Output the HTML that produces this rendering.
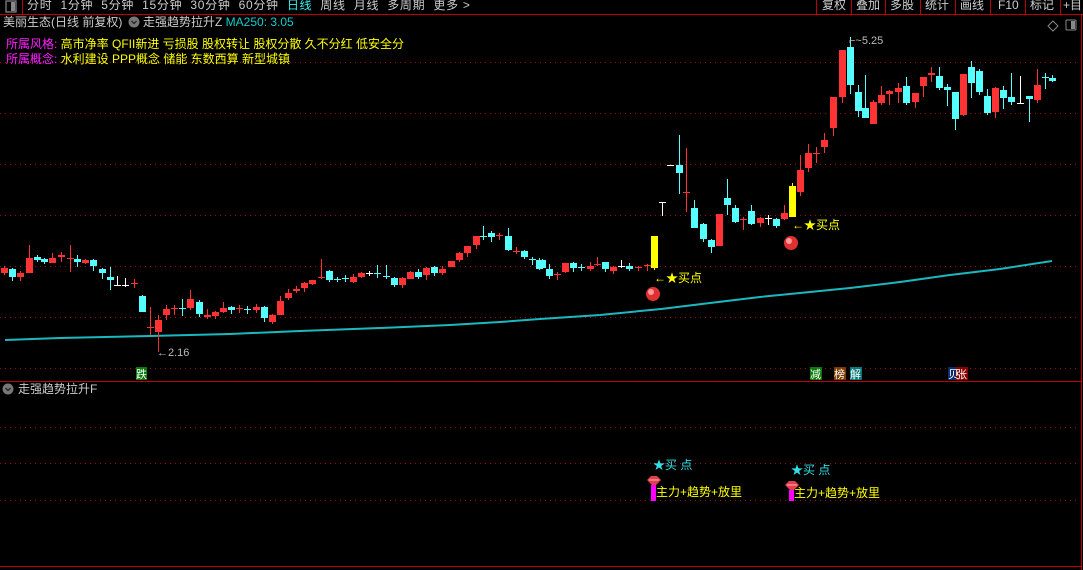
<!DOCTYPE html>
<html><head><meta charset="utf-8">
<style>
html,body{margin:0;padding:0;background:#000;width:1083px;height:570px;overflow:hidden;font-family:"Liberation Sans","Noto Sans CJK SC",sans-serif;}
#c{position:absolute;left:0;top:0}
.t{position:absolute;white-space:nowrap;font-size:12px;line-height:14px}
</style></head><body>
<svg id="c" width="1083" height="570" xmlns="http://www.w3.org/2000/svg" font-family="Liberation Sans, Noto Sans CJK SC, sans-serif">
<g id="grid" stroke="#a01010" stroke-width="1" stroke-dasharray="1,4">
<line x1="0" y1="62.5" x2="1080" y2="62.5"/>
<line x1="0" y1="113.5" x2="1080" y2="113.5"/>
<line x1="0" y1="164.5" x2="1080" y2="164.5"/>
<line x1="0" y1="215.5" x2="1080" y2="215.5"/>
<line x1="0" y1="266.5" x2="1080" y2="266.5"/>
<line x1="0" y1="317.5" x2="1080" y2="317.5"/>
<line x1="0" y1="368.5" x2="1080" y2="368.5"/>
<line x1="0" y1="427.5" x2="1080" y2="427.5"/>
<line x1="0" y1="463.5" x2="1080" y2="463.5"/>
<line x1="0" y1="500.5" x2="1080" y2="500.5"/>
</g>
<line x1="0" y1="14.5" x2="1083" y2="14.5" stroke="#c00000"/>
<line x1="22.5" y1="0" x2="22.5" y2="14" stroke="#c00000"/>
<rect x="6" y="1" width="10" height="11" fill="none" stroke="#888" stroke-width="1.2"/>
<rect x="11" y="2" width="4" height="9" fill="#888"/>
<g stroke="#c00000">
<line x1="816.5" y1="0" x2="816.5" y2="14"/><line x1="851.5" y1="0" x2="851.5" y2="14"/>
<line x1="885.5" y1="0" x2="885.5" y2="14"/><line x1="920.5" y1="0" x2="920.5" y2="14"/>
<line x1="955.5" y1="0" x2="955.5" y2="14"/><line x1="990.5" y1="0" x2="990.5" y2="14"/>
<line x1="1025.5" y1="0" x2="1025.5" y2="14"/><line x1="1060.5" y1="0" x2="1060.5" y2="14"/>
<line x1="1081.5" y1="14" x2="1081.5" y2="570"/>
</g>
<path d="M1053 21 l5 5 -5 5 -5 -5z" fill="none" stroke="#888"/>
<rect x="1066" y="20" width="10" height="10" rx="1" fill="none" stroke="#888"/>
<rect x="1071" y="21" width="4" height="8" fill="#888"/>
<line x1="0" y1="381.5" x2="1081" y2="381.5" stroke="#c00000"/>
<line x1="0" y1="566.5" x2="1081" y2="566.5" stroke="#c00000"/>
<circle cx="134" cy="22" r="5.5" fill="#777"/><path d="M131.5 21 l2.5 2.5 2.5-2.5" stroke="#222" fill="none" stroke-width="1.3"/>
<circle cx="8" cy="389" r="5.5" fill="#777"/><path d="M5.5 388 l2.5 2.5 2.5-2.5" stroke="#222" fill="none" stroke-width="1.3"/>
<polyline points="5,340 60,338 150,336 230,334 300,331 380,328 450,325 500,322 540,319 600,315 661,309 710,303 760,297 810,292 850,288 900,282 950,275 1000,269 1052,261" fill="none" stroke="#1cb8c0" stroke-width="2"/>
<g id="candles"></g>
<line x1="158.5" y1="340" x2="158.5" y2="352" stroke="#d33"/>
<text x="157" y="356" fill="#bbb" font-size="11">←2.16</text>
<text x="849" y="44" fill="#bbb" font-size="11">⌐~5.25</text>
<circle cx="653" cy="294" r="7" fill="#e03030"/><circle cx="651" cy="292" r="3" fill="#ff9a9a"/>
<circle cx="791" cy="243" r="7" fill="#e03030"/><circle cx="789" cy="241" r="3" fill="#ff9a9a"/>
<text x="654" y="282" fill="#ffff00" font-size="12">←★买点</text>
<text x="792" y="229" fill="#ffff00" font-size="12">←★买点</text>
<rect x="136" y="367" width="11" height="13" fill="#0a7a0a"/><text x="136" y="378" fill="#fff" font-size="11">跌</text>
<rect x="810" y="367" width="12" height="13" fill="#0a7a0a"/><text x="810" y="378" fill="#fff" font-size="11">减</text>
<rect x="834" y="367" width="12" height="13" fill="#7a3a00"/><text x="834" y="378" fill="#fff" font-size="11">榜</text>
<rect x="850" y="367" width="12" height="13" fill="#087878"/><text x="850" y="378" fill="#fff" font-size="11">解</text>
<rect x="948" y="367" width="8" height="13" fill="#0a2a6a"/><rect x="956" y="367" width="12" height="13" fill="#880000"/>
<text x="948" y="378" fill="#fff" font-size="11">贝</text><text x="956" y="378" fill="#fff" font-size="11">张</text>
<g>
<text x="653" y="469" fill="#30e0e8" font-size="12">★买 点</text>
<path d="M647 480 l4-4 h6 l4 4 -7 7z" fill="#e04050"/><path d="M649 480 h10" stroke="#ffb0b0"/>
<rect x="651" y="485" width="5" height="16" fill="#ff00ff"/>
<text x="656" y="496" fill="#ffff00" font-size="12">主力+趋势+放里</text>
<text x="791" y="474" fill="#30e0e8" font-size="12">★买 点</text>
<path d="M785 485 l4-4 h6 l4 4 -7 7z" fill="#e04050"/><path d="M787 485 h10" stroke="#ffb0b0"/>
<rect x="789" y="490" width="5" height="11" fill="#ff00ff"/>
<text x="794" y="497" fill="#ffff00" font-size="12">主力+趋势+放里</text>
</g>
</svg>
<div class="t" style="left:27px;top:-2px;color:#ccc;letter-spacing:0.7px">分时&nbsp; 1分钟&nbsp; 5分钟&nbsp; 15分钟&nbsp; 30分钟&nbsp; 60分钟&nbsp; <span style="color:#3ee">日线</span>&nbsp; 周线&nbsp; 月线&nbsp; 多周期&nbsp; 更多 &gt;</div>
<div class="t" style="left:822px;top:-2px;color:#ccc">复权</div>
<div class="t" style="left:856px;top:-2px;color:#ccc">叠加</div>
<div class="t" style="left:890px;top:-2px;color:#ccc">多股</div>
<div class="t" style="left:925px;top:-2px;color:#ccc">统计</div>
<div class="t" style="left:960px;top:-2px;color:#ccc">画线</div>
<div class="t" style="left:998px;top:-2px;color:#ccc">F10</div>
<div class="t" style="left:1030px;top:-2px;color:#ccc">标记</div>
<div class="t" style="left:1063px;top:-2px;color:#ccc">+目</div>
<div class="t" style="left:3px;top:15px;color:#ccc">美丽生态(日线 前复权)</div>
<div class="t" style="left:143px;top:15px;color:#ccc">走强趋势拉升Z <span style="color:#1cc">MA250: 3.05</span></div>
<div class="t" style="left:6px;top:37px;color:#ff20ff">所属风格: <span style="color:#ff0">高市净率 QFII新进 亏损股 股权转让 股权分散 久不分红 低安全分</span></div>
<div class="t" style="left:6px;top:52px;color:#ff20ff">所属概念: <span style="color:#ff0">水利建设 PPP概念 储能 东数西算 新型城镇</span></div>
<div class="t" style="left:18px;top:382px;color:#ccc">走强趋势拉升F</div>
<script>
var R='#ff3333',C='#55ffff',W='#ffffff',Y='#ffff00';
var a=[
[13,268,273,266,275,R],[36,269,277,268,281,C],[59,273,277,271,281,R],[83,258,273,245,273,R],[106,257,260,255,262,C],[129,259,262,258,264,C],
[152,258,263,253,263,R],[176,255,257,252,262,R],[202,258,259,245,272,R],[225,259,262,255,267,C],[248,260,263,259,264,R],[271,260,266,259,271,C],
[295,269,273,268,279,C],[318,277,280,267,290,C],[340,285,286,276,286,W],[363,285,286,278,287,W],[390,283,284,279,288,R],[413,296,312,295,312,C],
[437,327,328,307,335,R],[460,320,332,315,350,R],[483,309,315,305,320,R],[506,308,309,305,315,R],[529,308,309,299,316,C],[553,299,308,290,310,R],
[578,302,314,300,317,C],[602,315,317,309,319,R],[625,312,316,311,319,R],[648,308,312,302,313,R],[671,307,310,306,314,C],[694,308,309,305,313,R],
[718,309,310,306,314,C],[744,307,310,304,313,R],[767,307,318,306,322,C],[790,315,322,314,324,R],[814,301,315,296,315,R],[837,293,298,289,300,R],
[860,289,291,286,293,R],[883,283,288,282,292,R],[906,280,284,280,285,R],[932,277,278,259,279,R],[956,271,280,270,282,C],[980,279,280,277,282,C],
[1003,278,279,275,282,C],[1026,277,282,274,283,R],[1049,273,277,272,278,R],[1072,273,274,271,276,W],[1095,273,274,265,278,C],[1120,276,277,265,279,C],
[1145,278,285,277,287,C],[1168,278,285,277,288,R],[1192,272,279,271,279,R],[1215,272,277,269,279,C],[1238,268,275,267,280,R],[1261,267,273,266,276,C],
[1284,269,273,266,275,R],[1310,261,267,261,267,R],[1333,253,260,252,262,R],[1356,246,253,246,257,R],[1381,236,245,236,249,R],[1404,236,237,226,240,C],
[1427,233,237,231,242,C],[1450,235,236,233,240,R],[1474,236,250,228,251,C],[1499,251,252,247,254,R],[1522,251,257,250,259,C],[1545,259,260,257,265,C],[1565,260,269,258,270,C]
];
var b=[
[5,260,268,259,269,C],[25,269,276,264,279,C],[48,274,275,272,280,R],[71,263,272,263,273,R],[94,263,268,262,272,C],[119,267,268,264,271,C],
[143,266,269,262,271,R],[166,264,265,257,266,R],[189,262,269,262,272,C],[212,267,271,266,274,R],[234,266,267,260,268,W],[258,266,269,263,271,C],
[284,267,268,266,271,R],[308,265,266,264,271,R],[330,236,268,236,270,Y],[353,202,203,202,216,W],[376,165,166,165,166,W],[400,165,173,135,194,C],
[423,192,193,148,212,R],[446,208,228,200,228,C],[471,224,239,223,242,C],[494,240,247,239,253,C],[517,214,246,214,246,R],[541,198,205,179,215,C],
[564,208,222,205,223,C],[587,219,220,217,230,R],[610,211,224,205,225,C],[634,218,223,217,227,R],[658,218,219,215,225,W],[683,219,226,218,228,C],
[706,213,219,205,220,R],[729,186,217,183,217,Y],[752,170,192,155,196,R],[775,153,168,144,172,R],[798,153,154,147,163,R],[821,140,147,133,153,R],
[847,97,128,97,136,R],[871,50,97,50,103,R],[894,47,85,37,94,C],[917,92,111,85,117,C],[940,108,118,75,118,C],[963,102,124,100,124,R],
[986,95,103,86,105,R],[1009,91,94,90,105,R],[1035,88,92,83,103,R],[1058,86,103,77,105,C],[1082,93,102,93,108,R],[1105,77,86,77,97,R],
[1128,73,75,67,82,R],[1151,76,88,67,90,C],[1174,87,90,84,106,C],[1199,92,119,92,130,C],[1223,74,115,74,116,R],[1246,67,83,61,98,C],
[1268,71,92,69,95,C],[1292,96,113,89,115,C],[1315,88,112,87,118,R],[1338,90,98,86,109,C],[1361,97,102,73,105,C],[1386,103,104,76,104,W],
[1411,96,99,96,122,C],[1434,85,100,69,103,R],[1457,77,78,73,89,C],[1480,78,81,75,82,C]
];
var g=document.getElementById('candles'),h='';
function add(arr,ox,s){arr.forEach(function(d){var x=Math.round(ox+d[0]/s),c=d[5];
h+='<line x1="'+(x+0.5)+'" y1="'+d[3]+'" x2="'+(x+0.5)+'" y2="'+d[4]+'" stroke="'+c+'"/>';
var bh=Math.max(1,d[2]-d[1]);h+='<rect x="'+(x-3)+'" y="'+d[1]+'" width="7" height="'+bh+'" fill="'+c+'"/>';});}
add(a,0,2.904);add(b,540,2.888);
g.innerHTML=h;
</script>
</body></html>
